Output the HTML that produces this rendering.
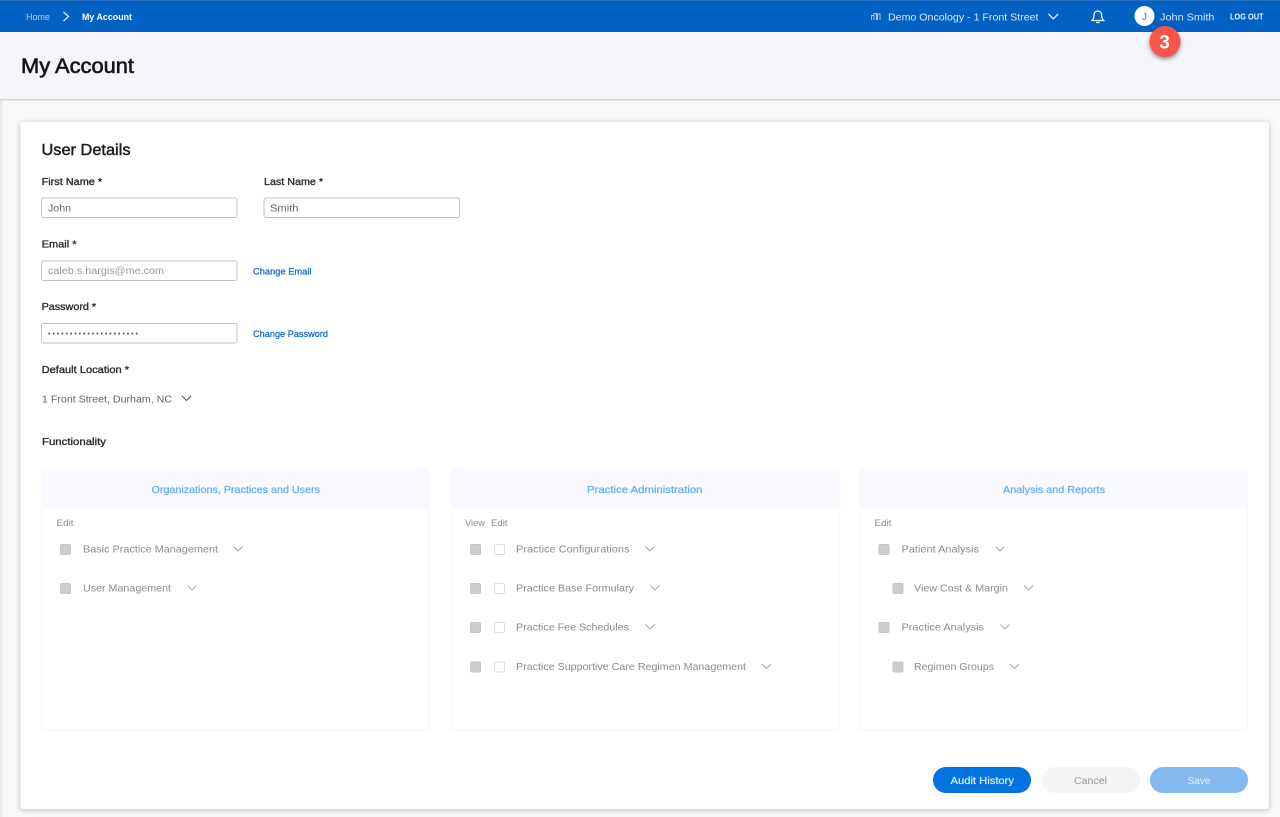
<!DOCTYPE html>
<html lang="en">
<head>
<meta charset="utf-8">
<title>My Account</title>
<style>
html,body{margin:0;padding:0;width:1280px;height:817px;overflow:hidden;background:#f9f9f9}
svg{display:block}
text{font-family:"Liberation Sans",sans-serif;font-size:10.5px;fill:#8c8c8c}
.lab{fill:#2c2c2c;stroke:#2c2c2c;stroke-width:.35px;font-size:10.5px}
.val{fill:#666;font-size:10px}
.lnk{fill:#0f68c8;stroke:#0f68c8;stroke-width:.25px;font-size:9.5px}
.hd{fill:#6cb0f2;stroke:#6cb0f2;stroke-width:.3px;font-size:10.5px}
.col{fill:#8e8e8e;font-size:9.5px}
.nav{fill:#dbe8f8;font-size:10.5px}
.chev{fill:none;stroke:#a8a8a8;stroke-width:1}
.cb{fill:#cdcdcd;stroke:#c6c6c6;stroke-width:1}
.cw{fill:#fff;stroke:#dcdcdc;stroke-width:1}
.inp{fill:#fff;stroke:#c2c2c2;stroke-width:1}
.pan{fill:#fff;stroke:#f6f6f6;stroke-width:1}
.card{filter:drop-shadow(0 1px 3px rgba(0,0,0,.25))}
.badge{filter:drop-shadow(0 2px 2px rgba(0,0,0,.45))}
</style>
</head>
<body>
<svg width="1280" height="817" viewBox="0 0 1280 817" xmlns="http://www.w3.org/2000/svg">
<defs>
<linearGradient id="edge" x1="0" x2="1" y1="0" y2="0"><stop offset="0" stop-color="#e4e4e4"/><stop offset="1" stop-color="#f9f9f9" stop-opacity="0"/></linearGradient>
</defs>
<rect width="1280" height="817" fill="#f9f9f9"/>
<rect y="100" width="6" height="717" fill="url(#edge)"/>

<!-- header band -->
<rect y="32" width="1280" height="67" fill="#f4f6fb"/>
<rect y="99" width="1280" height="1.5" fill="#d6d7db"/>
<text x="21" y="73" textLength="113" lengthAdjust="spacingAndGlyphs" style="font-size:21px;fill:#151515;stroke:#151515;stroke-width:.6px">My Account</text>

<!-- top bar -->
<rect width="1280" height="32" fill="#0061c2"/>
<rect width="1280" height="1" fill="#2a6fbd"/>
<text x="26" y="20" textLength="24" lengthAdjust="spacingAndGlyphs" style="font-size:9.5px;fill:#b4cfee">Home</text>
<path d="M63.500 12l5 4.500-5 4.500" fill="none" stroke="#dbe8f8" stroke-width="1.300"/>
<text x="82" y="20" textLength="50" lengthAdjust="spacingAndGlyphs" style="font-size:9.500px;font-weight:bold;fill:#fff">My Account</text>

<path d="M871.500 20v-4.500h2.500V20M874 20v-6.500h2.500V20M877.500 20v-6h2.500v6" fill="none" stroke="#a9c8ec" stroke-width="1"/>
<text class="nav" x="888" y="20.500" textLength="150.500" lengthAdjust="spacingAndGlyphs">Demo Oncology - 1 Front Street</text>
<path d="M1048.500 14l4.800 4.800 4.800-4.800" fill="none" stroke="#e6eff9" stroke-width="1.300"/>
<path d="M1092 20.500c1.700-1.500 2-2.800 2-5.500 0-2.400 1.400-4 3.800-4s3.800 1.600 3.800 4c0 2.700.3 4 2 5.500zM1096 22.500h3.600" fill="none" stroke="#fff" stroke-width="1.200"/>
<circle cx="1144.500" cy="16" r="10" fill="#fff"/>
<text x="1144.500" y="20" text-anchor="middle" style="font-size:10px;fill:#2f7fd8">J</text>
<text class="nav" x="1160" y="20.500" textLength="54.500" lengthAdjust="spacingAndGlyphs">John Smith</text>
<text x="1230" y="19.500" textLength="33.500" lengthAdjust="spacingAndGlyphs" style="font-size:8px;font-weight:bold;fill:#eef4fb">LOG OUT</text>

<!-- badge -->
<g class="badge">
<circle cx="1165" cy="41.500" r="15.500" fill="#f8564a"/>
</g>
<text x="1164.500" y="48.500" text-anchor="middle" style="font-size:19px;font-weight:bold;fill:#fff">3</text>

<!-- card -->
<rect class="card" x="20.500" y="122" width="1248.500" height="687" rx="3" fill="#fff"/>

<text x="41.500" y="155" textLength="89" lengthAdjust="spacingAndGlyphs" style="font-size:16px;fill:#1c1c1c;stroke:#1c1c1c;stroke-width:.45px">User Details</text>

<text class="lab" x="41.600" y="185" textLength="60.500" lengthAdjust="spacingAndGlyphs">First Name *</text>
<text class="lab" x="264" y="185" textLength="59" lengthAdjust="spacingAndGlyphs">Last Name *</text>
<rect class="inp" x="41.500" y="198" width="195.500" height="19.500" rx="2"/>
<rect class="inp" x="264" y="198" width="195.500" height="19.500" rx="2"/>
<text class="val" x="48" y="211.500" textLength="23" lengthAdjust="spacingAndGlyphs">John</text>
<text class="val" x="270" y="211.500" textLength="28.500" lengthAdjust="spacingAndGlyphs">Smith</text>

<text class="lab" x="41.600" y="247.500" textLength="35" lengthAdjust="spacingAndGlyphs">Email *</text>
<rect class="inp" x="41.500" y="261" width="195.500" height="19.500" rx="2"/>
<text class="val" x="48" y="274" textLength="116" lengthAdjust="spacingAndGlyphs" style="fill:#9b9b9b">caleb.s.hargis@me.com</text>
<text class="lnk" x="253" y="274.500" textLength="58.500" lengthAdjust="spacingAndGlyphs">Change Email</text>

<text class="lab" x="41.600" y="310" textLength="54.500" lengthAdjust="spacingAndGlyphs">Password *</text>
<rect class="inp" x="41.500" y="323.500" width="195.500" height="19.500" rx="2"/>
<text x="48" y="336" textLength="90" style="font-size:7px;fill:#555">•••••••••••••••••••••</text>
<text class="lnk" x="253" y="337" textLength="75" lengthAdjust="spacingAndGlyphs">Change Password</text>

<text class="lab" x="41.600" y="373" textLength="87.500" lengthAdjust="spacingAndGlyphs">Default Location *</text>
<text class="val" x="42" y="402.500" textLength="130" lengthAdjust="spacingAndGlyphs">1 Front Street, Durham, NC</text>
<path d="M182 396l4.500 4.500 4.500-4.500" fill="none" stroke="#555" stroke-width="1"/>

<text class="lab" x="42" y="445" textLength="64" lengthAdjust="spacingAndGlyphs">Functionality</text>

<!-- panel 1 -->
<rect class="pan" x="41.500" y="469.500" width="387.500" height="260.500" rx="3"/>
<path d="M41.500 509v-36.500a3 3 0 0 1 3-3H426a3 3 0 0 1 3 3V509z" fill="#f8faff"/>
<text class="hd" x="151.500" y="493" textLength="168.500" lengthAdjust="spacingAndGlyphs">Organizations, Practices and Users</text>
<text class="col" x="56.500" y="526" textLength="17" lengthAdjust="spacingAndGlyphs">Edit</text>
<rect class="cb" x="60.500" y="544.500" width="10" height="10" rx="1.500"/>
<text x="83" y="552.500" textLength="135" lengthAdjust="spacingAndGlyphs">Basic Practice Management</text>
<path class="chev" d="M233.500 546.500l4.500 4.500 4.500-4.500"/>
<rect class="cb" x="60.500" y="583.500" width="10" height="10" rx="1.500"/>
<text x="83" y="591.500" textLength="88" lengthAdjust="spacingAndGlyphs">User Management</text>
<path class="chev" d="M187.500 585.500l4.500 4.500 4.500-4.500"/>

<!-- panel 2 -->
<rect class="pan" x="451.500" y="469.500" width="387.500" height="260.500" rx="3"/>
<path d="M451.500 509v-36.500a3 3 0 0 1 3-3H836a3 3 0 0 1 3 3V509z" fill="#f8faff"/>
<text class="hd" x="587" y="493" textLength="115.500" lengthAdjust="spacingAndGlyphs">Practice Administration</text>
<text class="col" x="465" y="526" textLength="20" lengthAdjust="spacingAndGlyphs">View</text>
<text class="col" x="491" y="526" textLength="16.500" lengthAdjust="spacingAndGlyphs">Edit</text>

<rect class="cb" x="470.500" y="544.500" width="10" height="10" rx="1.500"/>
<rect class="cw" x="494.500" y="544.500" width="10" height="10" rx="1.500"/>
<text x="516" y="552.500" textLength="113.500" lengthAdjust="spacingAndGlyphs">Practice Configurations</text>
<path class="chev" d="M645.500 546.500l4.500 4.500 4.500-4.500"/>

<rect class="cb" x="470.500" y="583.500" width="10" height="10" rx="1.500"/>
<rect class="cw" x="494.500" y="583.500" width="10" height="10" rx="1.500"/>
<text x="516" y="591.500" textLength="118" lengthAdjust="spacingAndGlyphs">Practice Base Formulary</text>
<path class="chev" d="M650.500 585.500l4.500 4.500 4.500-4.500"/>

<rect class="cb" x="470.500" y="622.500" width="10" height="10" rx="1.500"/>
<rect class="cw" x="494.500" y="622.500" width="10" height="10" rx="1.500"/>
<text x="516" y="630.500" textLength="113" lengthAdjust="spacingAndGlyphs">Practice Fee Schedules</text>
<path class="chev" d="M645.500 624.500l4.500 4.500 4.500-4.500"/>

<rect class="cb" x="470.500" y="662" width="10" height="10" rx="1.500"/>
<rect class="cw" x="494.500" y="662" width="10" height="10" rx="1.500"/>
<text x="516" y="670" textLength="230" lengthAdjust="spacingAndGlyphs">Practice Supportive Care Regimen Management</text>
<path class="chev" d="M762 664l4.500 4.500 4.500-4.500"/>

<!-- panel 3 -->
<rect class="pan" x="860" y="469.500" width="387.500" height="260.500" rx="3"/>
<path d="M860 509v-36.500a3 3 0 0 1 3-3H1244.500a3 3 0 0 1 3 3V509z" fill="#f8faff"/>
<text class="hd" x="1003" y="493" textLength="102" lengthAdjust="spacingAndGlyphs">Analysis and Reports</text>
<text class="col" x="874.500" y="526" textLength="17" lengthAdjust="spacingAndGlyphs">Edit</text>

<rect class="cb" x="879" y="544.500" width="10" height="10" rx="1.500"/>
<text x="901.500" y="552.500" textLength="77.500" lengthAdjust="spacingAndGlyphs">Patient Analysis</text>
<path class="chev" d="M995.500 546.500l4.500 4.500 4.500-4.500"/>

<rect class="cb" x="893" y="583.500" width="10" height="10" rx="1.500"/>
<text x="914" y="591.500" textLength="94" lengthAdjust="spacingAndGlyphs">View Cost &amp; Margin</text>
<path class="chev" d="M1024 585.500l4.500 4.500 4.500-4.500"/>

<rect class="cb" x="879" y="622.500" width="10" height="10" rx="1.500"/>
<text x="901.500" y="630.500" textLength="82.500" lengthAdjust="spacingAndGlyphs">Practice Analysis</text>
<path class="chev" d="M1000.500 624.500l4.500 4.500 4.500-4.500"/>

<rect class="cb" x="893" y="662" width="10" height="10" rx="1.500"/>
<text x="914" y="670" textLength="80" lengthAdjust="spacingAndGlyphs">Regimen Groups</text>
<path class="chev" d="M1010 664l4.500 4.500 4.500-4.500"/>

<!-- buttons -->
<rect x="933" y="767" width="98" height="26" rx="13" fill="#0073e0"/>
<text x="950.500" y="784" textLength="63.500" lengthAdjust="spacingAndGlyphs" style="fill:#e3effb;stroke:#e3effb;stroke-width:.2px">Audit History</text>
<rect x="1042" y="767" width="98" height="26" rx="13" fill="#f5f5f5"/>
<text x="1074" y="784" textLength="33" lengthAdjust="spacingAndGlyphs" style="fill:#a9a9a9;stroke:#a9a9a9;stroke-width:.2px">Cancel</text>
<rect x="1150" y="767" width="98" height="26" rx="13" fill="#82b9f0"/>
<text x="1187.500" y="784" textLength="23" lengthAdjust="spacingAndGlyphs" style="fill:#d3e6fa;stroke:#d3e6fa;stroke-width:.2px">Save</text>
</svg>
</body>
</html>
